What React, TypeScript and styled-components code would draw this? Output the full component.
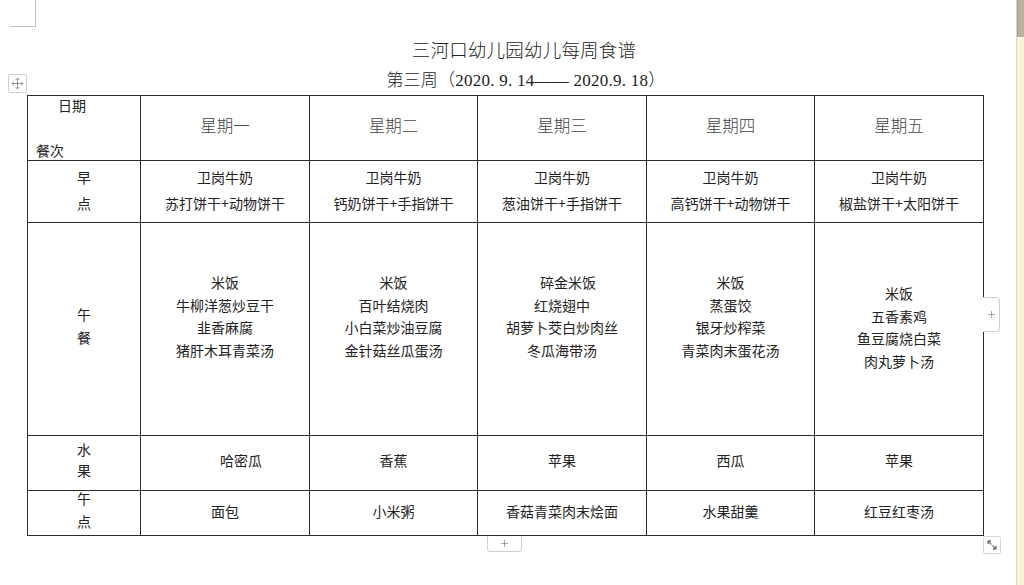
import React from "react";
import styled, { createGlobalStyle } from "styled-components";
import { Move, Plus } from "lucide-react";

const Global = createGlobalStyle`
  html, body { margin: 0; padding: 0; background: #fff; }
  body { width: 1024px; height: 585px; overflow: hidden; font-family: "Noto Sans CJK SC", "Liberation Sans", sans-serif; color: #222; }
`;

const Root = styled.div`
  display: flex;
  width: 1024px;
  height: 585px;
`;

const Doc = styled.div`
  position: relative;
  flex: 1;
  display: flex;
  flex-direction: column;
`;

const CornerMark = styled.div`
  position: absolute;
  left: 10px;
  top: 0;
  width: 25px;
  height: 26px;
  border-right: 1px solid #bdbdbd;
  border-bottom: 1px solid #bdbdbd;
`;

const Title = styled.div`
  margin-top: 37px;
  padding-left: 32px;
  text-align: center;
  font-size: 18.5px;
  font-weight: 300;
  line-height: 24px;
  color: #222;
  letter-spacing: 0.2px;
`;

const Subtitle = styled.div`
  margin-top: 8px;
  padding-left: 36px;
  text-align: center;
  font-family: "Liberation Serif", "Noto Sans CJK SC", serif;
  font-size: 17px;
  font-weight: 300;
  letter-spacing: 0.25px;
  line-height: 24px;
  color: #222;
`;

const TableWrap = styled.div`
  position: relative;
  margin-top: 2px;
  margin-left: 27px;
  width: 956px;
`;

const Table = styled.table`
  border-collapse: collapse;
  table-layout: fixed;
  width: 956px;
  font-size: 14px;
  color: #222;
`;

const Row = styled.tr<{ $h: number }>`
  height: ${(p) => p.$h}px;
`;

const Cell = styled.td<{ $shift?: number }>`
  border: 1px solid #2a2a2a;
  padding: 0 0 0 ${(p) => p.$shift ?? 0}px;
  text-align: center;
  vertical-align: middle;
  white-space: nowrap;
`;

const Stack = styled.div<{ $lh: number; $dy: number; $dx?: number }>`
  height: 20px;
  display: flex;
  flex-direction: column;
  justify-content: center;
  line-height: ${(p) => p.$lh}px;
  transform: translate(${(p) => p.$dx ?? 0}px, ${(p) => p.$dy}px);
`;

const Corner = styled.div`
  height: 64px;
  display: flex;
  flex-direction: column;
  justify-content: space-between;
  font-size: 14px;
  line-height: 18px;
`;

const CornerTop = styled.div`
  text-align: left;
  padding-left: 30px;
`;

const CornerBottom = styled.div`
  text-align: left;
  padding-left: 8px;
  padding-bottom: 1px;
`;

const DayHead = styled.td`
  border: 1px solid #2a2a2a;
  text-align: center;
  vertical-align: middle;
  font-size: 16.5px;
  font-weight: 300;
  color: #444;
  padding-bottom: 8px;
`;

const MoveHandle = styled.div`
  position: absolute;
  left: -19px;
  top: -21px;
  width: 17px;
  height: 17px;
  border: 1px solid #d0d0d0;
  border-radius: 2px;
  background: #fff;
  display: flex;
  align-items: center;
  justify-content: center;
  color: #8a8a8a;
`;

const SidePlus = styled.div`
  position: absolute;
  left: 956px;
  top: 202px;
  width: 16px;
  height: 33px;
  border: 1px solid #cfcfcf;
  border-left: none;
  border-radius: 0 4px 4px 0;
  background: #fff;
  display: flex;
  align-items: center;
  justify-content: center;
  color: #777;
`;

const BottomPlus = styled.div`
  position: absolute;
  left: 460px;
  top: 441px;
  width: 33px;
  height: 15px;
  border: 1px solid #cfcfcf;
  border-top: none;
  border-radius: 0 0 4px 4px;
  background: #fff;
  display: flex;
  align-items: center;
  justify-content: center;
  color: #777;
`;

const Resize = styled.div`
  position: absolute;
  left: 956px;
  top: 441px;
  width: 16px;
  height: 16px;
  border: 1px solid #d6d6d6;
  border-radius: 2px;
  background: #fff;
  display: flex;
  align-items: center;
  justify-content: center;
`;

const Scrollbar = styled.div`
  width: 7px;
  border-left: 1px solid #d9d9d9;
  background: #fcf3d6;
  display: flex;
  flex-direction: column;
`;

const Thumb = styled.div`
  height: 37px;
  background: #b9b49e;
  border-left: 1px solid #9e9a88;
`;

const days = ["星期一", "星期二", "星期三", "星期四", "星期五"];

const breakfast = [
  ["卫岗牛奶", "苏打饼干+动物饼干"],
  ["卫岗牛奶", "钙奶饼干+手指饼干"],
  ["卫岗牛奶", "葱油饼干+手指饼干"],
  ["卫岗牛奶", "高钙饼干+动物饼干"],
  ["卫岗牛奶", "椒盐饼干+太阳饼干"],
];

const lunch: { lines: string[]; dy: number }[] = [
  { lines: ["米饭", "牛柳洋葱炒豆干", "韭香麻腐", "猪肝木耳青菜汤"], dy: -13 },
  { lines: ["米饭", "百叶结烧肉", "小白菜炒油豆腐", "金针菇丝瓜蛋汤"], dy: -13 },
  { lines: ["碎金米饭", "红烧翅中", "胡萝卜茭白炒肉丝", "冬瓜海带汤"], dy: -13 },
  { lines: ["米饭", "蒸蛋饺", "银牙炒榨菜", "青菜肉末蛋花汤"], dy: -13 },
  { lines: ["米饭", "五香素鸡", "鱼豆腐烧白菜", "肉丸萝卜汤"], dy: -2 },
];

const fruit = ["哈密瓜", "香蕉", "苹果", "西瓜", "苹果"];
const snack = ["面包", "小米粥", "香菇青菜肉末烩面", "水果甜羹", "红豆红枣汤"];

const LunchLine = styled.div<{ $dx?: number }>`
  position: relative;
  left: ${(p) => p.$dx ?? 0}px;
`;

const Lines = ({ items }: { items: string[] }) => (
  <>
    {items.map((c, i) => (
      <div key={i}>{c}</div>
    ))}
  </>
);

export default function App() {
  return (
    <Root>
      <Global />
      <Doc>
        <CornerMark />
        <Title>三河口幼儿园幼儿每周食谱</Title>
        <Subtitle>第三周（2020. 9. 14—— 2020.9. 18）</Subtitle>
        <TableWrap>
          <MoveHandle>
            <Move size={13} strokeWidth={1.6} />
          </MoveHandle>
          <Table>
            <colgroup>
              <col style={{ width: 113 }} />
              <col style={{ width: 169 }} />
              <col style={{ width: 168 }} />
              <col style={{ width: 169 }} />
              <col style={{ width: 168 }} />
              <col style={{ width: 169 }} />
            </colgroup>
            <tbody>
              <Row $h={65}>
                <Cell>
                  <Corner>
                    <CornerTop>日期</CornerTop>
                    <CornerBottom>餐次</CornerBottom>
                  </Corner>
                </Cell>
                {days.map((d) => (
                  <DayHead key={d}>{d}</DayHead>
                ))}
              </Row>
              <Row $h={62}>
                <Cell>
                  <Stack $lh={26} $dy={-2}>
                    <Lines items={["早", "点"]} />
                  </Stack>
                </Cell>
                {breakfast.map((b, i) => (
                  <Cell key={i}>
                    <Stack $lh={26} $dy={-2}>
                      <Lines items={b} />
                    </Stack>
                  </Cell>
                ))}
              </Row>
              <Row $h={213}>
                <Cell>
                  <Stack $lh={23} $dy={-3}>
                    <Lines items={["午", "餐"]} />
                  </Stack>
                </Cell>
                {lunch.map((l, i) => (
                  <Cell key={i}>
                    <Stack $lh={22.5} $dy={l.dy}>
                      {l.lines.map((t, j) => (
                        <LunchLine key={j} $dx={i === 2 && j === 0 ? 6 : 0}>
                          {t}
                        </LunchLine>
                      ))}
                    </Stack>
                  </Cell>
                ))}
              </Row>
              <Row $h={55}>
                <Cell>
                  <Stack $lh={21} $dy={-3}>
                    <Lines items={["水", "果"]} />
                  </Stack>
                </Cell>
                {fruit.map((f, i) => (
                  <Cell key={i}>
                    <Stack $lh={22} $dy={-3} $dx={i === 0 ? 16 : 0}>
                      {f}
                    </Stack>
                  </Cell>
                ))}
              </Row>
              <Row $h={45}>
                <Cell>
                  <Stack $lh={23} $dy={-3}>
                    <Lines items={["午", "点"]} />
                  </Stack>
                </Cell>
                {snack.map((s, i) => (
                  <Cell key={i}>
                    <Stack $lh={22} $dy={-2}>
                      {s}
                    </Stack>
                  </Cell>
                ))}
              </Row>
            </tbody>
          </Table>
          <SidePlus>
            <Plus size={11} strokeWidth={1.4} />
          </SidePlus>
          <BottomPlus>
            <Plus size={11} strokeWidth={1.4} />
          </BottomPlus>
          <Resize>
            <svg width="12" height="12" viewBox="0 0 12 12">
              <path d="M2 2 L5.5 5.5 M2 2 L2 5 M2 2 L5 2" stroke="#777" strokeWidth="1.3" fill="none" />
              <path d="M10 10 L6.5 6.5 M10 10 L10 7 M10 10 L7 10" stroke="#777" strokeWidth="1.3" fill="none" />
            </svg>
          </Resize>
        </TableWrap>
      </Doc>
      <Scrollbar>
        <Thumb />
      </Scrollbar>
    </Root>
  );
}
